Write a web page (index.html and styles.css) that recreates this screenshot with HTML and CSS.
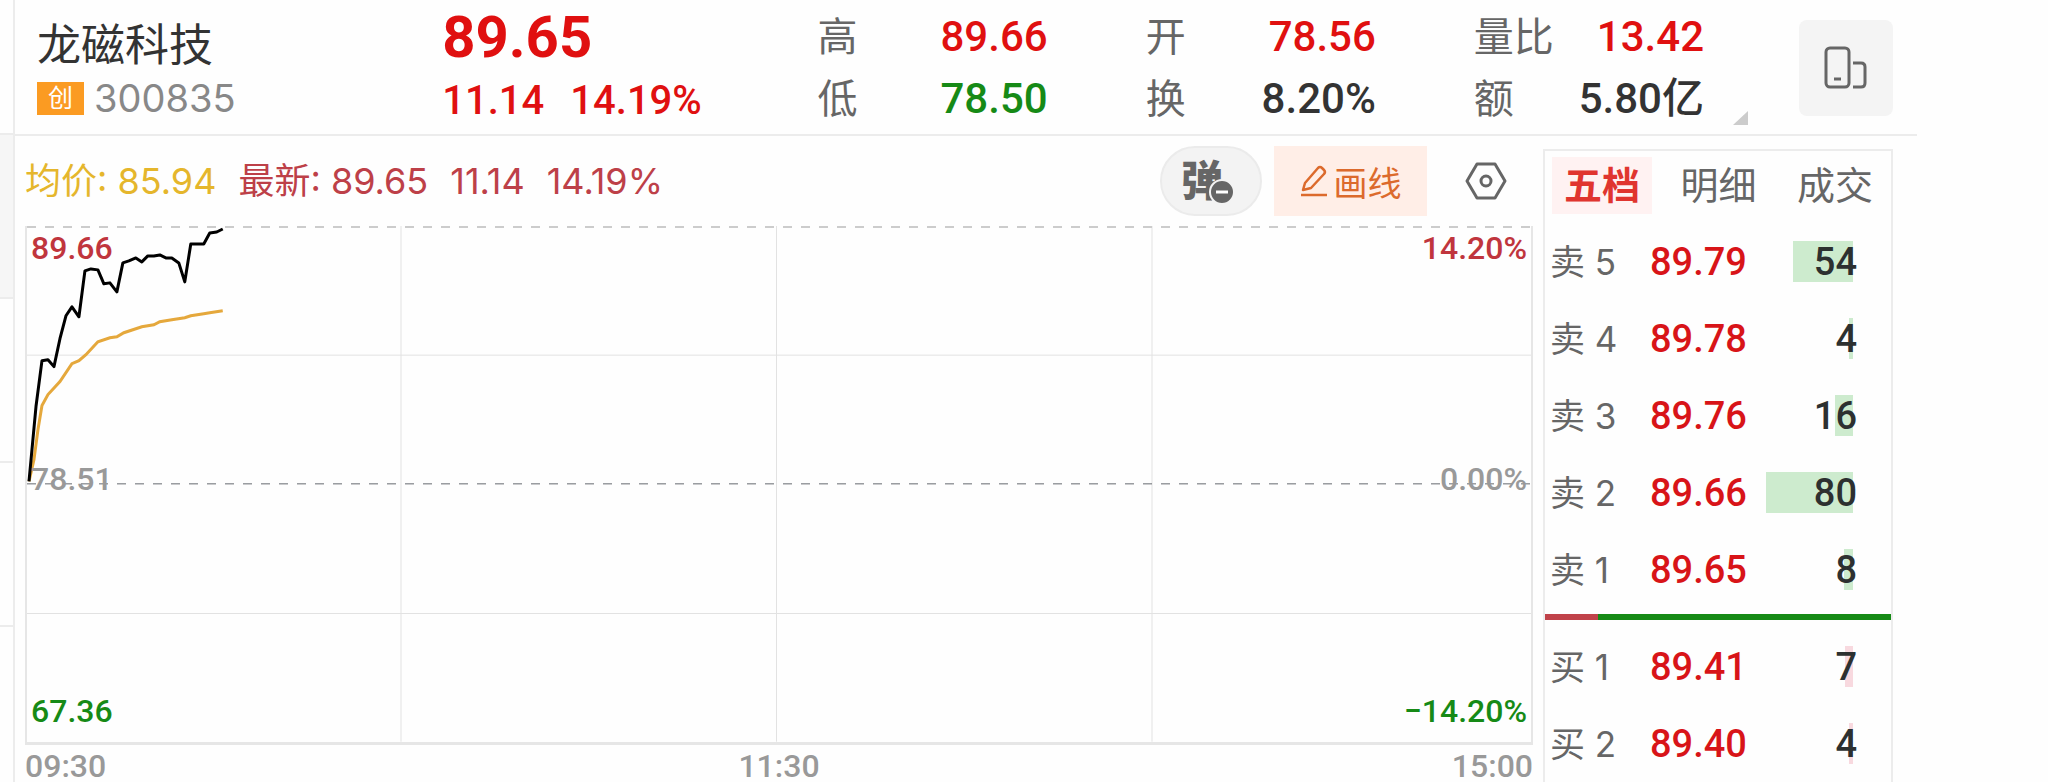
FILE: index.html
```
<!DOCTYPE html>
<html lang="zh-CN">
  <head>
    <meta charset="UTF-8" />
    <meta name="viewport" content="width=device-width, initial-scale=1.0" />
    <title>龙磁科技 300835</title>
    <link rel="stylesheet" href="styles.css">
  </head>
  <body>
    <div class="app">
      <aside class="gutter">
        <div class="gutter-head"></div>
        <div class="gutter-item active"></div>
        <div class="gutter-item"></div>
        <div class="gutter-item"></div>
      </aside>

      <div class="page">
        <header class="stock-header">
          <div class="identity">
            <h1>龙磁科技</h1>
            <div class="code"><span class="badge">创</span>300835</div>
          </div>
          <div class="price up">
            <div class="last">89.65</div>
            <div class="change"><span>11.14</span><span>14.19%</span></div>
          </div>
          <dl class="quotes">
            <div><dt>高</dt><dd class="up">89.66</dd></div>
            <div><dt>开</dt><dd class="up">78.56</dd></div>
            <div><dt>量比</dt><dd class="up">13.42</dd></div>
            <div><dt>低</dt><dd class="down">78.50</dd></div>
            <div><dt>换</dt><dd>8.20%</dd></div>
            <div><dt>额</dt><dd>5.80亿</dd></div>
          </dl>
          <div class="more"></div>
          <button class="rotate-btn" aria-label="横屏">
            <svg width="44" height="44" viewBox="0 0 44 44" fill="none" stroke="#666" stroke-width="3">
              <rect x="2" y="2" width="23" height="39" rx="4" />
              <path d="M10 33h7" />
              <path d="M29 17h8q4 0 4 4v16q0 4-4 4h-8" />
            </svg>
          </button>
        </header>

        <main class="content">
          <section class="chart-panel">
            <div class="toolbar">
              <div class="legend">
                <span class="avg">均价: 85.94</span>
                <span>最新: 89.65</span>
                <span>11.14</span>
                <span>14.19%</span>
              </div>
              <button class="pop-btn">弹<svg class="minus" width="26" height="26" viewBox="0 0 26 26">
                  <circle cx="13" cy="13" r="12" fill="#666" stroke="#f3f3f3" stroke-width="2" />
                  <path d="M7 13h12" stroke="#fff" stroke-width="3" />
                </svg></button>
              <button class="draw-btn">
                <svg width="30" height="32" viewBox="0 0 30 32" fill="none" stroke="#dc6a2c" stroke-width="2.5" stroke-linejoin="round">
                  <path d="M5 18 18 3q2-2 4 0l2 2q2 2 0 4L11 23l-8 2z" />
                  <path d="M1 30h26" />
                </svg>
                画线
              </button>
              <button class="settings-btn" aria-label="设置">
                <svg width="42" height="40" viewBox="0 0 42 40" fill="none" stroke="#666" stroke-width="3" stroke-linejoin="round">
                  <path d="M12 3h18l10 17-10 17H12L2 20z" />
                  <circle cx="21" cy="20" r="5" />
                </svg>
              </button>
            </div>

            <div class="chart">
              <svg class="plot" viewBox="0 0 1506 517" preserveAspectRatio="none">
                <g class="grid">
                  <path d="M0 129.5H1506M0 388.5H1506" />
                  <path d="M374.5 0V517M750.5 0V517M1126.5 0V517" />
                </g>
                <path class="limit" d="M0 1H1506" />
                <path class="base" d="M0 258.5H1506" />
                <polyline class="avg-line" points="2,256 7,234 11,204 15,180 21,169 33,156 45,138 52,135 59,129 71,116 83,112 90,111 97,107 115,101 127,99 133,96 145,94 158,92 164,90 177,88 183,87 196,85" />
                <polyline class="price-line" points="2,256 9,181 15,135 21,134 27,141 33,113 39,90 45,81 52,91 58,45 64,43 71,44 77,58 83,57 90,66 96,37 102,35 109,32 115,36 121,30 127,30 133,29 139,32 145,32 152,37 158,56 164,18 177,18 183,7 190,6 196,3" />
              </svg>
              <div class="scale high"><span>89.66</span><span>14.20%</span></div>
              <div class="scale mid"><span>78.51</span><span>0.00%</span></div>
              <div class="scale low"><span>67.36</span><span>−14.20%</span></div>
            </div>
            <div class="times"><span>09:30</span><span>11:30</span><span>15:00</span></div>
          </section>

          <section class="book">
            <nav class="tabs">
              <button class="tab active">五档</button>
              <button class="tab">明细</button>
              <button class="tab">成交</button>
            </nav>
            <table class="levels asks">
              <tr><th scope="row">卖 5</th><td>89.79</td><td class="vol"><i style="width: 60px"></i><b>54</b></td></tr>
              <tr><th scope="row">卖 4</th><td>89.78</td><td class="vol"><i style="width: 4px"></i><b>4</b></td></tr>
              <tr><th scope="row">卖 3</th><td>89.76</td><td class="vol"><i style="width: 18px"></i><b>16</b></td></tr>
              <tr><th scope="row">卖 2</th><td>89.66</td><td class="vol"><i style="width: 87px"></i><b>80</b></td></tr>
              <tr><th scope="row">卖 1</th><td>89.65</td><td class="vol"><i style="width: 9px"></i><b>8</b></td></tr>
            </table>
            <div class="ratio"><div class="ratio-buy" style="width: 15.4%"></div></div>
            <table class="levels bids">
              <tr><th scope="row">买 1</th><td>89.41</td><td class="vol"><i style="width: 8px"></i><b>7</b></td></tr>
              <tr><th scope="row">买 2</th><td>89.40</td><td class="vol"><i style="width: 4px"></i><b>4</b></td></tr>
            </table>
          </section>
        </main>
      </div>
    </div>
  </body>
</html>
```
FILE: styles.css
```
* {
  margin: 0;
  padding: 0;
  box-sizing: border-box;
}

body {
  font-family: Inter, 'Noto Sans CJK SC', sans-serif;
  background: #fefefe;
  color: #333;
}

button {
  border: none;
  background: none;
  font-family: inherit;
  color: #666;
  cursor: pointer;
}

svg {
  display: block;
}

.app {
  display: flex;
  min-height: 100vh;
  padding-right: 131px;
}

/* edge of the list on the left */
.gutter {
  width: 15px;
  flex-shrink: 0;
  border-right: 2px solid #ececec;
}

.gutter-head {
  height: 135px;
  border-bottom: 2px solid #ececec;
}

.gutter-item {
  height: 164px;
  border-bottom: 2px solid #ececec;
}

.gutter-item.active {
  background: #f6f6f6;
}

.page {
  flex: 1;
  min-width: 0;
}

.up {
  color: #e01010;
}

.down {
  color: #168a16;
}

/* header */
.stock-header {
  display: grid;
  grid-template-columns: 405fr 375fr 886fr 95px 94px;
  height: 136px;
  padding: 0 24px 0 22px;
  border-bottom: 2px solid #ececec;
}

h1 {
  margin-top: 15px;
  font-size: 44px;
  font-weight: 400;
  line-height: 60px;
}

.code {
  display: flex;
  align-items: center;
  gap: 10px;
  font-size: 38px;
  line-height: 46px;
  color: #888;
}

.badge {
  width: 47px;
  background: #fb9b22;
  color: #fff;
  font-size: 25px;
  line-height: 33px;
  text-align: center;
}

.price {
  font-family: Roboto, sans-serif;
}

.last {
  margin-top: 4px;
  font-size: 58px;
  font-weight: 700;
  line-height: 66px;
}

.change {
  display: flex;
  gap: 26px;
  font-size: 40px;
  font-weight: 500;
  line-height: 62px;
}

.quotes {
  display: grid;
  grid-template-columns: repeat(3, 1fr);
  grid-auto-rows: 62px;
  column-gap: 98px;
  padding-top: 6px;
}

.quotes div {
  display: flex;
  justify-content: space-between;
  line-height: 62px;
}

.quotes dt {
  font-size: 40px;
  color: #666;
}

.quotes dd {
  font-family: Roboto, 'Noto Sans CJK SC', sans-serif;
  font-size: 42px;
  font-weight: 500;
}

.more {
  align-self: end;
  width: 15px;
  height: 14px;
  margin: 0 0 9px 29px;
  background: #ccc;
  clip-path: polygon(100% 0, 100% 100%, 0 100%);
}

.rotate-btn {
  display: flex;
  align-items: center;
  justify-content: center;
  height: 96px;
  margin-top: 20px;
  border-radius: 8px;
  background: #f4f4f4;
}

/* chart */
.content {
  display: flex;
  gap: 10px;
  padding: 0 24px 0 10px;
}

.chart-panel {
  flex: 1;
  min-width: 0;
}

.toolbar {
  display: flex;
  align-items: center;
  height: 90px;
}

.legend {
  display: flex;
  flex: 1;
  align-items: baseline;
  gap: 22px;
  font-size: 36px;
  line-height: 52px;
  color: #bd4048;
  white-space: nowrap;
}

.legend .avg {
  color: #e5b62c;
}

.pop-btn {
  position: relative;
  width: 102px;
  height: 70px;
  margin-right: 12px;
  padding-right: 18px;
  border: 2px solid #ebebeb;
  border-radius: 35px;
  background: #f3f3f3;
  font-size: 42px;
  font-weight: 900;
  line-height: 56px;
}

.minus {
  position: absolute;
  right: 25px;
  bottom: 9px;
}

.draw-btn {
  display: flex;
  align-items: center;
  justify-content: center;
  gap: 4px;
  width: 153px;
  height: 70px;
  background: #ffeee7;
  color: #dc6a2c;
  font-size: 34px;
}

.settings-btn {
  margin: 0 26px 0 38px;
}

.chart {
  position: relative;
  aspect-ratio: 1506 / 518;
  border: 2px solid #e6e6e6;
  border-top: none;
  border-bottom-width: 3px;
}

.plot {
  position: absolute;
  width: 100%;
  height: 100%;
  fill: none;
}

.plot path,
.plot polyline {
  vector-effect: non-scaling-stroke;
}

.grid {
  stroke: #e2e2e2;
  stroke-width: 1;
}

.limit {
  stroke: #ccc;
  stroke-width: 2;
  stroke-dasharray: 9 9;
}

.base {
  stroke: #666a70;
  stroke-width: 1;
  stroke-dasharray: 9 9;
}

.avg-line {
  stroke: #e5a83c;
  stroke-width: 3;
}

.price-line {
  stroke: #000;
  stroke-width: 3;
  stroke-linejoin: round;
}

.scale {
  position: absolute;
  left: 4px;
  right: 4px;
  display: flex;
  justify-content: space-between;
  font-family: Roboto, sans-serif;
  font-size: 32px;
  font-weight: 500;
  line-height: 40px;
}

.high {
  top: 2px;
  color: #c0353d;
}

.mid {
  bottom: 50%;
  margin-bottom: -15px;
  color: #999;
}

.low {
  bottom: 11px;
  color: #168a16;
}

.times {
  display: flex;
  justify-content: space-between;
  font-family: Roboto, sans-serif;
  font-size: 32px;
  font-weight: 500;
  line-height: 38px;
  padding-top: 2px;
  color: #999;
}

/* order book */
.book {
  flex: 0 0 350px;
  margin-top: 13px;
  border: 2px solid #ececec;
  border-bottom: none;
}

.tabs {
  display: flex;
  justify-content: space-between;
  padding: 6px 6px 9px 7px;
}

.tab {
  padding: 0 12px;
  font-size: 38px;
  line-height: 57px;
}

.tab.active {
  background: #fff2f2;
  color: #e0352f;
  font-weight: 700;
}

.levels {
  width: 100%;
  border-collapse: collapse;
  table-layout: fixed;
}

.levels tr {
  height: 77px;
}

.levels th {
  width: 105px;
  padding: 0 0 4px 5px;
  text-align: left;
  font-size: 35px;
  font-weight: 400;
  word-spacing: normal;
  color: #666;
}

.levels td {
  font-family: Roboto, sans-serif;
  font-size: 38px;
  font-weight: 500;
  color: #d81418;
}

.levels .vol {
  position: relative;
  padding-right: 34px;
  text-align: right;
  color: #2d3030;
}

.vol b {
  position: relative;
  font-weight: 500;
}

/* volume bar behind the number */
.vol i {
  position: absolute;
  top: 18px;
  right: 38px;
  height: 41px;
  background: #cdebce;
}

.bids .vol i {
  background: #f8d9df;
}

.ratio {
  height: 6px;
  margin: 6px 0 8px;
  background: #168a16;
}

.ratio-buy {
  height: 100%;
  background: #c0424a;
}
```
